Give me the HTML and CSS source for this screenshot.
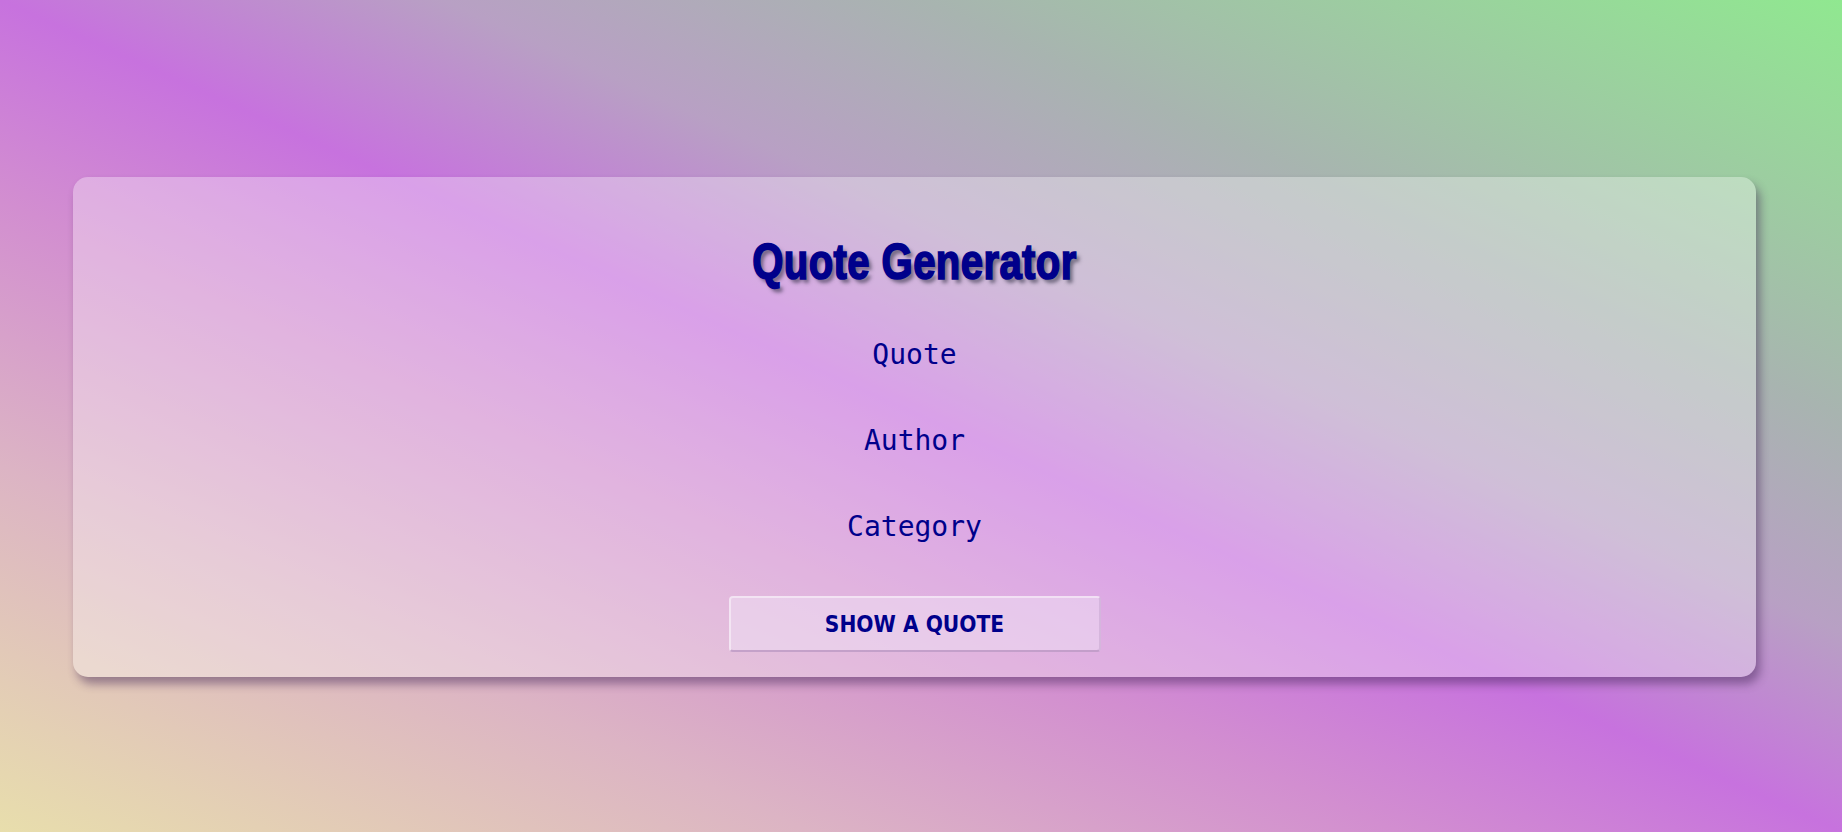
FILE: index.html
```html
<!DOCTYPE html>
<html lang="en">
<head>
<meta charset="utf-8">
<title>Quote Generator</title>
<link rel="stylesheet" href="styles.css">
</head>
<body>
<main class="card">
  <h1 class="title">Quote Generator</h1>
  <p class="line">Quote</p>
  <p class="line">Author</p>
  <p class="line">Category</p>
  <button class="btn" type="button">SHOW A QUOTE</button>
</main>
</body>
</html>
```
FILE: styles.css
```css
html, body {
  margin: 0;
  height: 100%;
}
body {
  background: linear-gradient(to top right, #e8deac 0%, #dcb4c4 22%, #d28ed0 38%, #c772de 50%, #b8a0c4 62%, #a8b4b0 75%, #90e890 100%);
  font-family: "DejaVu Sans Mono", monospace;
  overflow: hidden;
}
.card {
  box-sizing: border-box;
  margin: 177px 0 0 73px;
  width: 1683px;
  height: 500px;
  border-radius: 15px;
  background: rgba(255, 255, 255, 0.33);
  box-shadow: 4px 7px 10px rgba(60, 30, 80, 0.45);
  padding-top: 59px;
  display: flex;
  flex-direction: column;
  align-items: center;
}
.title {
  margin: 0 0 47px;
  font-family: "Liberation Sans", sans-serif;
  font-weight: 700;
  font-size: 46px;
  line-height: 52px;
  color: #00008b;
  -webkit-text-stroke: 1.6px #00008b;
  letter-spacing: 0.5px;
  text-shadow: 4px 4px 4px rgba(40, 40, 60, 0.55);
  transform: scale(0.87, 1.07);
}
.line {
  margin: 0 0 46px;
  font-size: 28px;
  line-height: 40px;
  color: #00008b;
}
.btn {
  margin-top: 3px;
  width: 372px;
  height: 56px;
  border: 2px solid rgba(255, 255, 255, 0.45);
  border-bottom-color: rgba(170, 130, 180, 0.6);
  border-right-color: rgba(200, 170, 210, 0.6);
  border-radius: 4px;
  background: rgba(240, 225, 245, 0.5);
  color: #00008b;
  font-family: "DejaVu Sans Condensed", "DejaVu Sans", sans-serif;
  font-weight: 700;
  font-size: 22.5px;
  cursor: pointer;
}
```
